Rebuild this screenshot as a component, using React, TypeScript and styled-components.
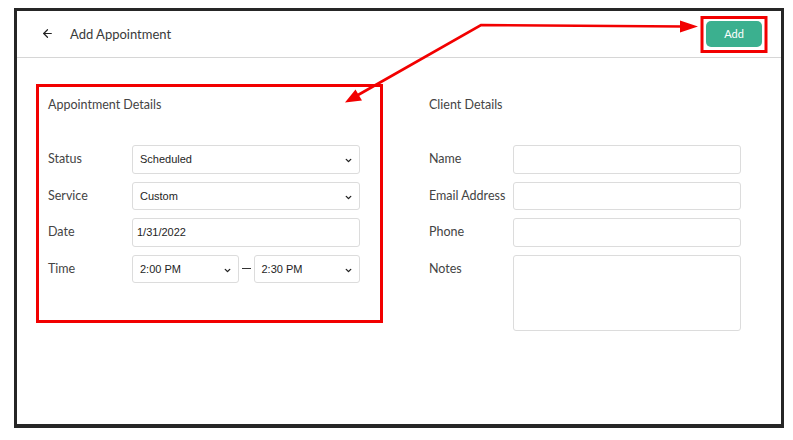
import { memo } from 'react';
import styled, { createGlobalStyle } from 'styled-components';
import { ArrowLeft, ChevronDown } from 'lucide-react';

const GlobalStyle = createGlobalStyle`
    html, body {
        margin: 0;
        padding: 0;
        background: #ffffff;
    }

    * {
        box-sizing: border-box;
    }
`;

const StyledPage = styled.div`
    position: relative;
    width: 793px;
    height: 440px;
    padding: 8px 0 0 14px;

    font-family: Lato, 'Noto Sans', sans-serif;
    color: #444444;
`;

const StyledFrame = styled.div`
    width: 770px;
    height: 420px;

    display: flex;
    flex-direction: column;

    border: 3px solid #262626;
    border-bottom-width: 4px;
    background: #ffffff;
`;

const StyledHeader = styled.header`
    height: 47px;
    padding: 0 19px 1px 24px;

    display: flex;
    align-items: center;
    justify-content: space-between;

    border-bottom: 1px solid #d6d6d6;

    > .headerLeft {
        display: flex;
        align-items: center;
        gap: 16px;
    }

    > .headerLeft > .headerTitle {
        margin-top: 1px;
        font-size: 13px;
        color: #3a3a3a;
    }
`;

const StyledAddButton = styled.button`
    width: 56px;
    height: 26px;

    border: none;
    border-radius: 5px;
    background: #3bb08f;

    color: #ffffff;
    font-family: Lato, 'Noto Sans', sans-serif;
    font-size: 11px;
`;

const StyledBody = styled.main`
    padding: 39px 0 0 31px;

    display: grid;
    grid-template-columns: 312px 312px;
    column-gap: 69px;
`;

const StyledSection = styled.section`
    > .sectionTitle {
        height: 16px;
        line-height: 16px;
        font-size: 12.5px;
        color: #444444;
    }

    > .fieldList {
        margin-top: 32px;

        display: flex;
        flex-direction: column;
        gap: 8px;
    }
`;

const StyledFieldRow = styled.div`
    display: grid;
    grid-template-columns: 84px 1fr;
    align-items: start;

    > .fieldLabel {
        line-height: 28px;
        font-size: 12.5px;
        color: #444444;
        white-space: nowrap;
    }
`;

const StyledControl = styled.div<{ $tall?: boolean; $inset?: number }>`
    position: relative;
    height: ${({ $tall }) => ($tall ? '76px' : '28.5px')};
    padding: 0 ${({ $inset }) => $inset ?? 7}px;

    display: flex;
    align-items: center;

    border: 1px solid #dcdcdc;
    border-radius: 3px;
    background: #ffffff;

    font-family: 'Liberation Sans', Arial, sans-serif;
    font-size: 11px;
    color: #1e1e1e;

    > .controlChevron {
        position: absolute;
        right: 6px;
        top: 10px;
    }
`;

const StyledTimeRange = styled.div`
    display: grid;
    grid-template-columns: 1fr 15px 1fr;
    align-items: center;

    > .timeDash {
        height: 1px;
        margin: 0 3px;
        background: #333333;
    }
`;

const StyledAnnotation = styled.svg`
    position: absolute;
    inset: 0;
    pointer-events: none;
`;

type TSelectBoxProps = {
    value: string;
};

function SelectBox(props: TSelectBoxProps) {
    const {
        value,
    } = props;

    return (
        <StyledControl>
            {value}
            <ChevronDown
                className="controlChevron"
                size={9}
                strokeWidth={3.6}
                color="#222" />
        </StyledControl>
    );
}

function App() {
    return (
        <>
            <GlobalStyle />
            <StyledPage>
                <StyledFrame>
                    <StyledHeader>
                        <div className="headerLeft">
                            <ArrowLeft
                                size={13}
                                strokeWidth={2.2}
                                color="#222" />

                            <div className="headerTitle">
                                Add Appointment
                            </div>
                        </div>

                        <StyledAddButton>
                            Add
                        </StyledAddButton>
                    </StyledHeader>

                    <StyledBody>
                        <StyledSection>
                            <div className="sectionTitle">
                                Appointment Details
                            </div>

                            <div className="fieldList">
                                <StyledFieldRow>
                                    <div className="fieldLabel">Status</div>
                                    <SelectBox value="Scheduled" />
                                </StyledFieldRow>

                                <StyledFieldRow>
                                    <div className="fieldLabel">Service</div>
                                    <SelectBox value="Custom" />
                                </StyledFieldRow>

                                <StyledFieldRow>
                                    <div className="fieldLabel">Date</div>
                                    <StyledControl $inset={4}>1/31/2022</StyledControl>
                                </StyledFieldRow>

                                <StyledFieldRow>
                                    <div className="fieldLabel">Time</div>
                                    <StyledTimeRange>
                                        <SelectBox value="2:00 PM" />
                                        <div className="timeDash" />
                                        <SelectBox value="2:30 PM" />
                                    </StyledTimeRange>
                                </StyledFieldRow>
                            </div>
                        </StyledSection>

                        <StyledSection>
                            <div className="sectionTitle">
                                Client Details
                            </div>

                            <div className="fieldList">
                                <StyledFieldRow>
                                    <div className="fieldLabel">Name</div>
                                    <StyledControl />
                                </StyledFieldRow>

                                <StyledFieldRow>
                                    <div className="fieldLabel">Email Address</div>
                                    <StyledControl />
                                </StyledFieldRow>

                                <StyledFieldRow>
                                    <div className="fieldLabel">Phone</div>
                                    <StyledControl />
                                </StyledFieldRow>

                                <StyledFieldRow>
                                    <div className="fieldLabel">Notes</div>
                                    <StyledControl $tall />
                                </StyledFieldRow>
                            </div>
                        </StyledSection>
                    </StyledBody>
                </StyledFrame>

                {/* red callouts drawn over the screenshot */}
                <StyledAnnotation
                    width="793"
                    height="440"
                    viewBox="0 0 793 440">
                    <rect x="37.5" y="85.5" width="344" height="236" fill="none" stroke="#f20000" strokeWidth="3" />
                    <rect x="702" y="17.5" width="64" height="34" fill="none" stroke="#f20000" strokeWidth="3" />
                    <polyline points="358,95 481,25 684,26.5" fill="none" stroke="#f20000" strokeWidth="2.6" />
                    <polygon points="680,20.5 698,26.5 680,32.5" fill="#f20000" />
                    <polygon points="345,102.5 362,100.5 355.5,89.5" fill="#f20000" />
                </StyledAnnotation>
            </StyledPage>
        </>
    );
}

export default memo(App);
